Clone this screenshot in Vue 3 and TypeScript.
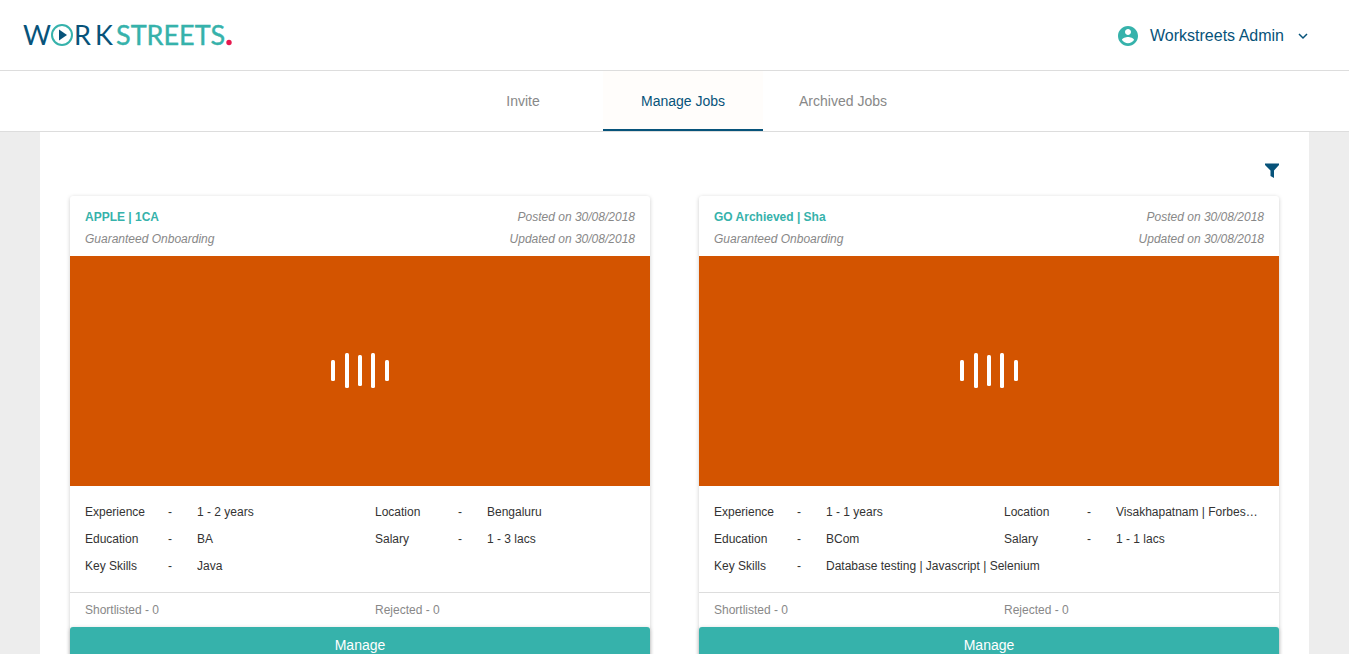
<script setup lang="ts">
import { ref } from 'vue'

interface Field {
  label: string
  value: string
}

interface Job {
  id: number
  title: string
  kind: string
  posted: string
  updated: string
  left: Field[]
  right: Field[]
  skills: string
  shortlisted: number
  rejected: number
}

const tabs = ['Invite', 'Manage Jobs', 'Archived Jobs']
const activeTab = ref('Manage Jobs')

const jobs: Job[] = [
  {
    id: 1,
    title: 'APPLE | 1CA',
    kind: 'Guaranteed Onboarding',
    posted: '30/08/2018',
    updated: '30/08/2018',
    left: [
      { label: 'Experience', value: '1 - 2 years' },
      { label: 'Education', value: 'BA' },
    ],
    right: [
      { label: 'Location', value: 'Bengaluru' },
      { label: 'Salary', value: '1 - 3 lacs' },
    ],
    skills: 'Java',
    shortlisted: 0,
    rejected: 0,
  },
  {
    id: 2,
    title: 'GO Archieved | Sha',
    kind: 'Guaranteed Onboarding',
    posted: '30/08/2018',
    updated: '30/08/2018',
    left: [
      { label: 'Experience', value: '1 - 1 years' },
      { label: 'Education', value: 'BCom' },
    ],
    right: [
      { label: 'Location', value: 'Visakhapatnam | Forbes…' },
      { label: 'Salary', value: '1 - 1 lacs' },
    ],
    skills: 'Database testing | Javascript | Selenium',
    shortlisted: 0,
    rejected: 0,
  },
]
</script>

<template>
  <div class="page">
    <header class="topbar">
      <a class="brand" href="#" aria-label="Workstreets">
        <svg width="214" height="44" viewBox="0 0 214 44" aria-hidden="true">
          <g class="word">
            <text class="navy" x="2" y="31">W</text>
            <text class="navy" x="53" y="31">R</text>
            <text class="navy" x="74" y="31">K</text>
            <text class="teal" x="95" y="31">STREETS</text>
          </g>
          <circle cx="41" cy="21" r="10" fill="none" stroke="#36b2ab" stroke-width="2" />
          <path d="M38 15.500v11l8-5.500z" fill="#07537a" />
          <circle cx="208" cy="28.500" r="2.700" fill="#e6194f" />
        </svg>
      </a>
      <button class="account" type="button">
        <svg width="24" height="24" viewBox="0 0 24 24" aria-hidden="true">
          <path
            fill="#36b2ab"
            d="M12 2C6.480 2 2 6.480 2 12s4.480 10 10 10 10-4.480 10-10S17.520 2 12 2zm0 3c1.660 0 3 1.340 3 3s-1.340 3-3 3-3-1.340-3-3 1.340-3 3-3zm0 14.200c-2.500 0-4.710-1.280-6-3.220.030-1.990 4-3.080 6-3.080 1.990 0 5.970 1.090 6 3.080-1.290 1.940-3.500 3.220-6 3.220z"
          />
        </svg>
        <span>Workstreets Admin</span>
        <svg width="10" height="10" viewBox="0 0 10 10" aria-hidden="true">
          <path d="M1 3l4 4 4-4" fill="none" stroke="#07537a" stroke-width="1.500" />
        </svg>
      </button>
    </header>

    <nav class="tabs" aria-label="Jobs">
      <a
        v-for="tab in tabs"
        :key="tab"
        href="#"
        class="tab"
        :class="{ active: tab === activeTab }"
        @click.prevent="activeTab = tab"
        >{{ tab }}</a
      >
    </nav>

    <main class="content">
      <div class="toolbar">
        <button class="filter" type="button" aria-label="Filter">
          <svg width="14" height="16" viewBox="0 0 14 16" aria-hidden="true">
            <path d="M0 0.500h14v1.500L9 7.500V15L5.500 13V7.500L0 2z" fill="#07537a" />
          </svg>
        </button>
      </div>

      <div class="cards">
        <article v-for="job in jobs" :key="job.id" class="card">
          <div class="head">
            <div>
              <h2>{{ job.title }}</h2>
              <p>{{ job.kind }}</p>
            </div>
            <div class="dates">
              <p>Posted on {{ job.posted }}</p>
              <p>Updated on {{ job.updated }}</p>
            </div>
          </div>

          <div class="banner">
            <svg width="58" height="36" viewBox="0 0 58 36" fill="#fff" aria-hidden="true">
              <rect x="0" y="7" width="4" height="21" rx="1.500" />
              <rect x="14" y="0" width="4" height="35" rx="1.500" />
              <rect x="27" y="2" width="4" height="31" rx="1.500" />
              <rect x="40" y="0" width="4" height="35" rx="1.500" />
              <rect x="54" y="7" width="4" height="21" rx="1.500" />
            </svg>
          </div>

          <div class="details">
            <dl>
              <div v-for="f in job.left" :key="f.label" class="field">
                <dt>{{ f.label }}</dt>
                <dd>-</dd>
                <dd class="value">{{ f.value }}</dd>
              </div>
            </dl>
            <dl>
              <div v-for="f in job.right" :key="f.label" class="field">
                <dt>{{ f.label }}</dt>
                <dd>-</dd>
                <dd class="value">{{ f.value }}</dd>
              </div>
            </dl>
            <dl class="wide">
              <div class="field">
                <dt>Key Skills</dt>
                <dd>-</dd>
                <dd class="value">{{ job.skills }}</dd>
              </div>
            </dl>
          </div>

          <div class="stats">
            <span>Shortlisted - {{ job.shortlisted }}</span>
            <span>Rejected - {{ job.rejected }}</span>
          </div>
          <button class="manage" type="button">Manage</button>
        </article>
      </div>
    </main>
  </div>
</template>

<style>
body {
  background: #ededed;
}
</style>

<style scoped>
.page {
  font-family: 'Liberation Sans', Arial, sans-serif;
  font-size: 12px;
  color: #333;
}

.page * {
  box-sizing: border-box;
}

button {
  font-family: inherit;
  border: 0;
  padding: 0;
  background: none;
  cursor: pointer;
}

h2,
p,
dl,
dd {
  margin: 0;
}

.topbar {
  display: flex;
  align-items: center;
  justify-content: space-between;
  height: 71px;
  padding: 2px 41px 0 21px;
  background: #fff;
  border-bottom: 1px solid #ddd;
}

.brand svg {
  display: block;
}

.word {
  font-family: Lato, sans-serif;
  font-size: 27px;
}

.navy {
  fill: #07537a;
}

.teal {
  fill: #36b2ab;
  stroke: #36b2ab;
  stroke-width: 0.4px;
}

.account {
  display: flex;
  align-items: center;
  color: #07537a;
  font-size: 16px;
  line-height: 24px;
}

.account span {
  margin: 0 14px 0 10px;
}

.tabs {
  display: flex;
  justify-content: center;
  height: 61px;
  padding-left: 17px;
  background: #fff;
  border-bottom: 1px solid #ddd;
}

.tab {
  width: 160px;
  border-bottom: 2px solid transparent;
  color: #888;
  font-size: 14px;
  line-height: 60px;
  text-align: center;
  text-decoration: none;
}

.tab.active {
  background: #fffdfb;
  border-color: #07537a;
  color: #07537a;
}

.content {
  margin: 0 40px;
  padding: 0 30px 30px;
  background: #fff;
}

.toolbar {
  display: flex;
  justify-content: flex-end;
  align-items: center;
  height: 64px;
  padding-top: 14px;
}

.filter svg {
  display: block;
}

.cards {
  display: grid;
  grid-template-columns: 1fr 1fr;
  gap: 49px;
}

.card {
  min-width: 0;
  background: #fff;
  border-radius: 3px;
  box-shadow: 0 1px 4px rgba(0, 0, 0, 0.2);
}

.head {
  display: flex;
  justify-content: space-between;
  padding: 10px 15px 6px;
  color: #888;
  font-style: italic;
  line-height: 22px;
}

.head h2 {
  color: #36b2ab;
  font-size: 12px;
  font-style: normal;
  font-weight: 700;
}

.dates {
  text-align: right;
}

.banner {
  display: flex;
  align-items: center;
  justify-content: center;
  height: 230px;
  background: #d35400;
}

.details {
  display: grid;
  grid-template-columns: 1fr 1fr;
  padding: 13px 0 12px;
  border-bottom: 1px solid #ddd;
}

.details dl {
  min-width: 0;
  padding: 0 15px;
}

.details .wide {
  grid-column: 1 / -1;
}

.field {
  display: grid;
  grid-template-columns: 83px 29px 1fr;
  line-height: 27px;
}

.value {
  overflow: hidden;
  white-space: nowrap;
  text-overflow: ellipsis;
}

.stats {
  display: grid;
  grid-template-columns: 1fr 1fr;
  color: #888;
  line-height: 34px;
}

.stats span {
  padding: 0 15px;
}

.manage {
  display: block;
  width: 100%;
  height: 36px;
  border-radius: 3px;
  background: #36b2ab;
  box-shadow: 0 1px 4px rgba(0, 0, 0, 0.2);
  color: #fff;
  font-size: 14px;
}
</style>
